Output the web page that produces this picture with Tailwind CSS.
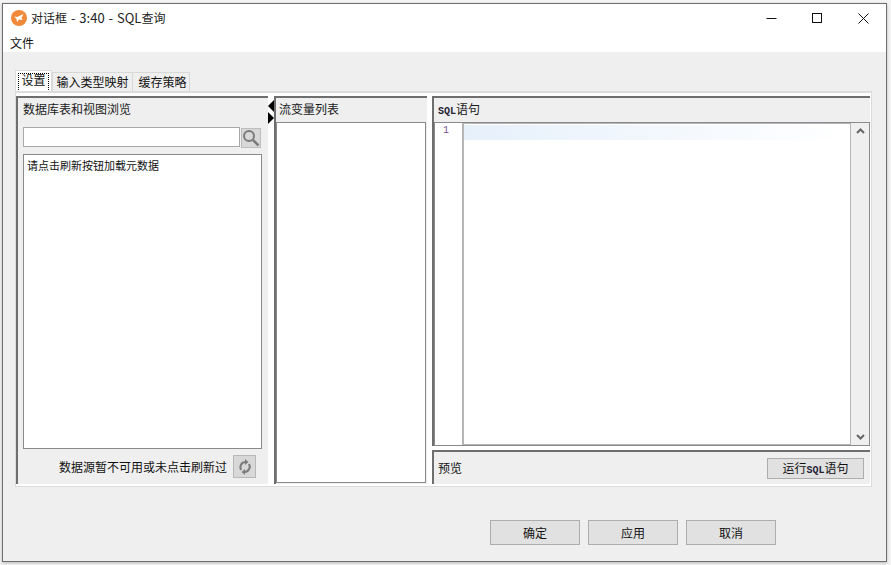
<!DOCTYPE html>
<html lang="zh-CN">
<head>
  <meta charset="UTF-8" />
  <title>对话框 - 3:40 - SQL查询</title>
  <script src="https://cdn.jsdelivr.net/npm/@tailwindcss/browser@4"></script>
</head>
<body class="w-[891px] h-[565px] overflow-hidden bg-[#f4f4f4] pt-[3px] pl-[2px] font-['Noto_Sans_CJK_SC','Liberation_Sans',sans-serif] text-[12px] leading-[16px] text-[#111]">
  <!-- Window -->
  <div class="w-[885px] h-[559px] border border-[#6f6f6f] bg-[#efefef] flex flex-col shadow-[0_1px_3px_rgba(0,0,0,0.25)]">
    <!-- Title bar -->
    <header class="h-[30px] bg-white flex items-center shrink-0 pb-[2px]">
      <svg class="ml-[8px] mr-[4px]" width="16" height="16" viewBox="0 0 16 16">
        <circle cx="8" cy="8" r="8" fill="#f0893a" />
        <path d="M3 6.5 6 7 12.5 4 10.5 8 11.5 10 8 9.5 6 12 5.5 9Z" fill="#fff" />
      </svg>
      <span class="text-[13px] text-[#222] [word-spacing:1px]"><span class="text-[12px]">对话框</span> - 3:40 - SQL<span class="text-[12px]">查询</span></span>
      <div class="ml-auto flex items-center">
        <svg class="mr-[35px]" width="11" height="11" viewBox="0 0 11 11"><path d="M0.5 5.5H10.5" stroke="#111" fill="none" /></svg>
        <svg class="mr-[36px]" width="10" height="10" viewBox="0 0 10 10"><rect x="0.5" y="0.5" width="9" height="9" stroke="#111" fill="none" /></svg>
        <svg class="mr-[17px]" width="11" height="11" viewBox="0 0 11 11"><path d="M0.5 0.5 10.5 10.5M10.5 0.5 0.5 10.5" stroke="#111" fill="none" /></svg>
      </div>
    </header>
    <!-- Menu -->
    <nav class="h-[18px] bg-white px-[7px] shrink-0 leading-[18px]">文件</nav>

    <main class="flex-1 flex flex-col pl-[12px] pr-[14px] pt-[18px]">
      <!-- Tabs -->
      <div class="flex h-[21px] items-end shrink-0">
        <div class="h-[21px] w-[37px] bg-white border border-b-0 border-[#dcdcdc] p-[2px]">
          <div class="h-[19px] border border-dotted border-black text-center leading-[12px]">设置</div>
        </div>
        <div class="h-[19px] w-[81px] border border-b-0 border-[#d8d8d8] text-center leading-[17px]">输入类型映射</div>
        <div class="h-[19px] w-[57px] border-r border-t border-[#d8d8d8] pl-[3px] text-center leading-[17px]">缓存策略</div>
      </div>

      <!-- Tab panel -->
      <div class="h-[396px] border-t-2 border-r border-b border-l border-[#dcdcdc] bg-white flex pt-[3px] pb-[2px] pr-[1px]">
        <!-- Left panel -->
        <section class="w-[252px] border-t-[2px] border-l-[2px] border-[#6e6e6e] bg-[#efefef] flex flex-col px-[5px]">
          <div class="h-[27px] leading-[22px] text-[#1a1a1a]">数据库表和视图浏览</div>
          <div class="flex h-[20px] gap-[1px] mt-[2px]">
            <div class="w-[217px] bg-white border border-[#a9a9ad]"></div>
            <button class="w-[20px] h-[20px] mt-[1px] bg-[#d8d8d8] border border-[#bdbdbd] flex items-center justify-center" aria-label="搜索">
              <svg width="18" height="18" viewBox="0 0 18 18" fill="none">
                <circle cx="7" cy="7" r="5" stroke="#7b7b7b" stroke-width="2" />
                <path d="M11 11 16.5 16.5" stroke="#7b7b7b" stroke-width="2.5" />
              </svg>
            </button>
          </div>
          <div class="mt-[7px] w-[239px] h-[295px] bg-white border border-[#8a8a8e] px-[3px] py-[2px] text-[11px] leading-[16px]">请点击刷新按钮加载元数据</div>
          <div class="flex-1 flex items-center justify-end pr-[7px] gap-[6px]">
            <span>数据源暂不可用或未点击刷新过</span>
            <button class="w-[23px] h-[23px] bg-[#d8d8d8] border border-[#b8b8b8] flex items-center justify-center" aria-label="刷新">
              <svg width="14" height="16" viewBox="0 0 14 16" fill="none" stroke="#7d7d7d" stroke-width="2.2">
                <path d="M3 11C1 7.5 3.5 3 7.5 3" />
                <path d="M11 5C13 8.5 10.5 13 6.5 13" />
                <path d="M7 0 10.5 3 7 6Z" fill="#7d7d7d" stroke="none" />
                <path d="M7 10 3.5 13 7 16Z" fill="#7d7d7d" stroke="none" />
              </svg>
            </button>
          </div>
        </section>

        <!-- Splitter -->
        <div class="relative w-[6px] bg-white">
          <span class="absolute left-0 top-[4px] w-0 h-0 border-y-[6px] border-y-transparent border-r-[6px] border-r-black"></span>
          <span class="absolute left-0 top-[16px] w-0 h-0 border-y-[6px] border-y-transparent border-l-[6px] border-l-black"></span>
        </div>

        <!-- Variable list -->
        <section class="w-[153px] border-t-[2px] border-l-[2px] border-[#6e6e6e] bg-[#efefef] flex flex-col">
          <div class="h-[24px] leading-[22px] pl-[3px] text-[#1a1a1a]">流变量列表</div>
          <div class="flex-1 bg-white border border-[#8a8a8e] mr-[1px] mb-[1px]"></div>
        </section>

        <div class="w-[5px] bg-white"></div>

        <!-- SQL panel -->
        <section class="flex-1 flex flex-col min-w-0">
          <div class="h-[350px] border-t-[2px] border-l-[2px] border-[#6e6e6e] bg-[#efefef] flex flex-col">
            <div class="h-[24px] leading-[22px] pl-[4px] text-[#1a1a1a]"><span class="font-['Liberation_Mono',monospace] font-bold text-[10px] text-[#223]">SQL</span>语句</div>
            <div class="flex-1 flex border border-[#8a8a8e] bg-white">
              <div class="w-[27px] bg-white text-right pr-[13px] pt-[1px] text-[10px] leading-[14px] text-[#7a4f9a] font-['Liberation_Mono',monospace]">1</div>
              <div class="flex-1 border-t border-l-2 border-b border-[#b5b5b5]">
                <div class="h-[15px] mt-[1px] bg-gradient-to-r from-[#e6f0fb] to-white"></div>
              </div>
              <div class="w-[19px] border-l border-[#b5b5b5] bg-[#efefef] flex flex-col items-center justify-between py-[5px]">
                <svg width="9" height="6" viewBox="0 0 9 6"><path d="M1 5 4.5 1.5 8 5" stroke="#666" stroke-width="2" fill="none" /></svg>
                <svg width="9" height="6" viewBox="0 0 9 6"><path d="M1 1 4.5 4.5 8 1" stroke="#666" stroke-width="2" fill="none" /></svg>
              </div>
            </div>
          </div>
          <div class="mt-[4px] flex-1 border-t-[2px] border-l-[2px] border-[#6e6e6e] bg-[#efefef] flex items-center justify-between pl-[4px] pr-[6px]">
            <span>预览</span>
            <button class="w-[97px] h-[21px] bg-[#e1e1e1] border border-[#adadad] leading-[18px]">运行<span class="font-['Liberation_Mono',monospace] font-bold text-[10px] text-[#223]">SQL</span>语句</button>
          </div>
        </section>
      </div>

      <!-- Dialog buttons -->
      <div class="flex justify-end gap-[8px] mt-[33px] pr-[96px]">
        <button class="w-[90px] h-[25px] bg-[#e1e1e1] border border-[#adadad]">确定</button>
        <button class="w-[90px] h-[25px] bg-[#e1e1e1] border border-[#adadad]">应用</button>
        <button class="w-[90px] h-[25px] bg-[#e1e1e1] border border-[#adadad]">取消</button>
      </div>
    </main>
  </div>
</body>
</html>
